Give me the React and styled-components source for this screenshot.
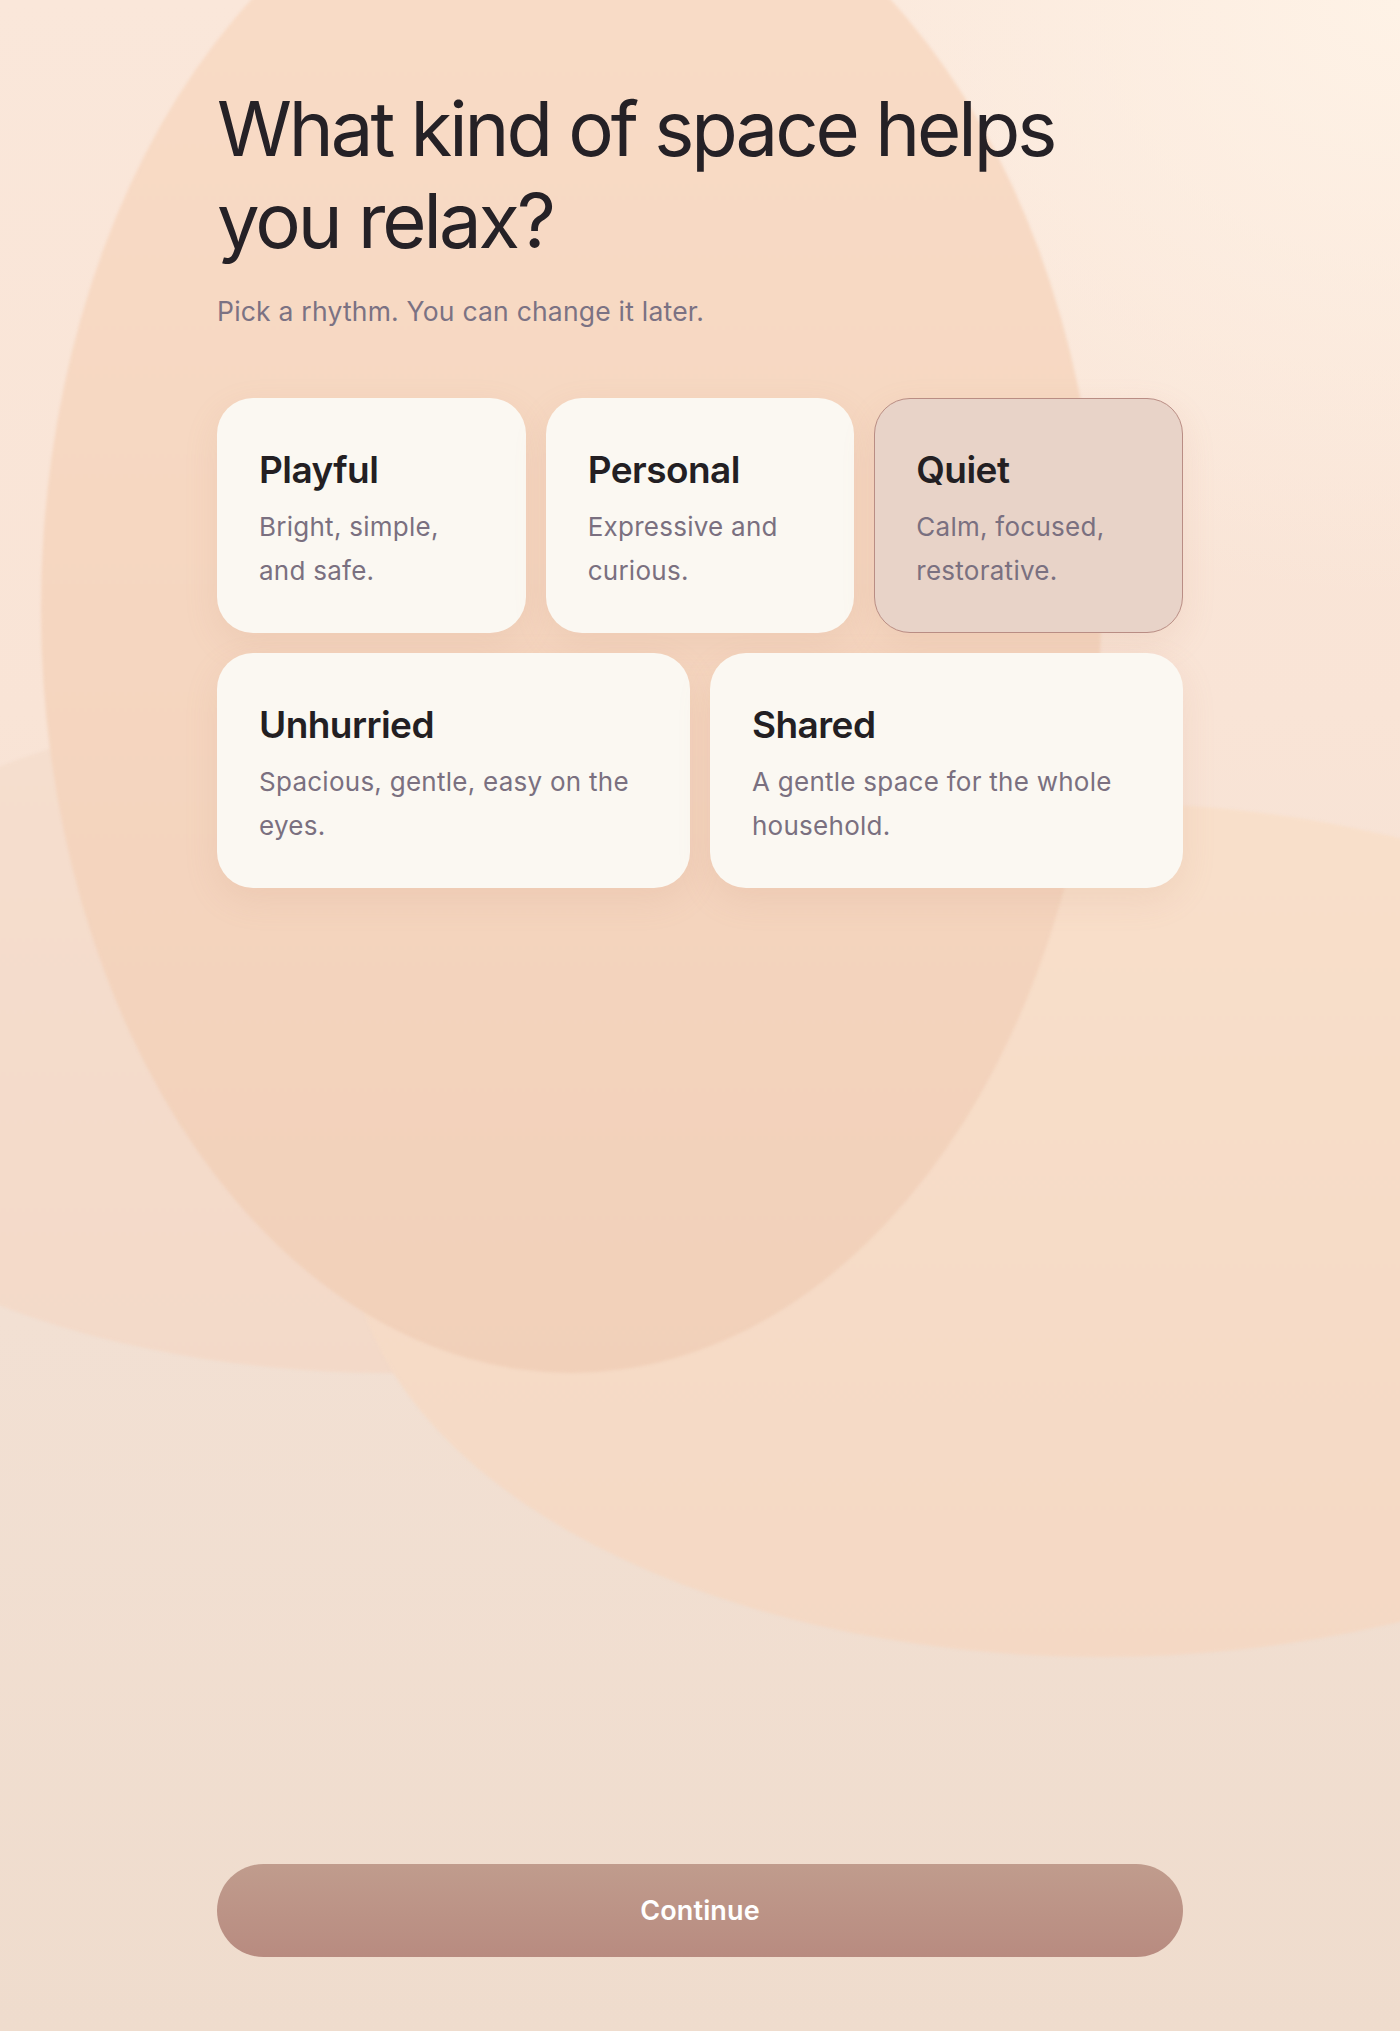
import React, { useState } from "react";
import styled, { createGlobalStyle } from "styled-components";

const GlobalStyle = createGlobalStyle`
  html, body {
    margin: 0;
    padding: 0;
  }
  body {
    font-family: Inter, "Noto Sans", "Liberation Sans", sans-serif;
    -webkit-font-smoothing: antialiased;
    background: #f6e3d5;
  }
  * {
    box-sizing: border-box;
  }
`;

const Page = styled.div`
  position: relative;
  min-height: 100vh;
  overflow: hidden;
  background:
    radial-gradient(ellipse 700px 600px at 1400px 0px, #fef2e6 0%, rgba(254, 242, 230, 0) 100%),
    linear-gradient(180deg, #fae7da 0%, #f9e4d6 35%, #f2e0d3 65%, #efdccd 100%);
`;

const Backdrop = styled.div`
  position: absolute;
  inset: 0;
  z-index: 0;
  pointer-events: none;
`;

const Blob = styled.div`
  position: absolute;
  left: ${({ $x, $rx }) => $x - $rx}px;
  top: ${({ $y, $ry }) => $y - $ry}px;
  width: ${({ $rx }) => $rx * 2}px;
  height: ${({ $ry }) => $ry * 2}px;
  border-radius: 50%;
  background: linear-gradient(180deg, ${({ $from }) => $from}, ${({ $to }) => $to});
  filter: blur(1.5px);
`;

const Content = styled.main`
  position: relative;
  z-index: 1;
  width: 966px;
  min-height: 100vh;
  margin: 0 auto;
  padding: 82px 0 74px;
  display: flex;
  flex-direction: column;
`;

const Heading = styled.h1`
  margin: 0;
  font-size: 76px;
  line-height: 92px;
  font-weight: 400;
  letter-spacing: -0.04em;
  color: #252126;
  max-width: 900px;
`;

const Subtitle = styled.p`
  margin: 26px 0 0;
  font-size: 26.5px;
  line-height: 39px;
  letter-spacing: 0.008em;
  color: #7b7283;
`;

const OptionGrid = styled.div`
  margin-top: 67px;
  display: grid;
  grid-template-columns: repeat(6, 1fr);
  gap: 20px;
`;

const OptionCard = styled.button`
  grid-column: span ${({ $span }) => $span};
  text-align: left;
  font: inherit;
  cursor: pointer;
  padding: 49px 40px 39px 41px;
  border-radius: 36px;
  border: 1.5px solid ${({ $active }) => ($active ? "#b98d84" : "transparent")};
  background: ${({ $active }) => ($active ? "#e8d3c8" : "#fbf8f2")};
  box-shadow: 0 12px 34px rgba(196, 140, 110, 0.14);
  display: flex;
  flex-direction: column;
  gap: 13px;
`;

const OptionTitle = styled.span`
  font-size: 37px;
  line-height: 44px;
  font-weight: 600;
  letter-spacing: -0.015em;
  color: #231f23;
`;

const OptionText = styled.span`
  font-size: 26px;
  line-height: 44px;
  letter-spacing: 0.01em;
  color: #7a7080;
`;

const ContinueButton = styled.button`
  margin-top: auto;
  height: 93px;
  border: none;
  border-radius: 999px;
  background: linear-gradient(180deg, #c09c8d 0%, #b88b80 100%);
  color: #ffffff;
  font: inherit;
  font-size: 27px;
  font-weight: 600;
  letter-spacing: 0.005em;
  cursor: pointer;
`;

const options = [
  { id: "playful", title: "Playful", text: "Bright, simple, and safe.", span: 2 },
  { id: "personal", title: "Personal", text: "Expressive and curious.", span: 2 },
  { id: "quiet", title: "Quiet", text: "Calm, focused, restorative.", span: 2 },
  { id: "unhurried", title: "Unhurried", text: "Spacious, gentle, easy on the eyes.", span: 3 },
  { id: "shared", title: "Shared", text: "A gentle space for the whole household.", span: 3 },
];

const App = () => {
  const [selected, setSelected] = useState("quiet");

  return (
    <>
      <GlobalStyle />
      <Page>
        <Backdrop>
          <Blob $x={389} $y={1036} $rx={648} $ry={337} $from="#f5dece" $to="#f3d9c8" />
          <Blob $x={1101} $y={1230} $rx={751} $ry={427} $from="#f8dfca" $to="#f4d8c4" />
          <Blob $x={571} $y={609} $rx={530} $ry={764} $from="#f9dcc7" $to="#f1d0b9" />
        </Backdrop>
        <Content>
          <Heading>What kind of space helps you relax?</Heading>
          <Subtitle>Pick a rhythm. You can change it later.</Subtitle>
          <OptionGrid>
            {options.map(({ id, title, text, span }) => (
              <OptionCard
                key={id}
                $span={span}
                $active={selected === id}
                onClick={() => setSelected(id)}
              >
                <OptionTitle>{title}</OptionTitle>
                <OptionText>{text}</OptionText>
              </OptionCard>
            ))}
          </OptionGrid>
          <ContinueButton>Continue</ContinueButton>
        </Content>
      </Page>
    </>
  );
};

export default App;
